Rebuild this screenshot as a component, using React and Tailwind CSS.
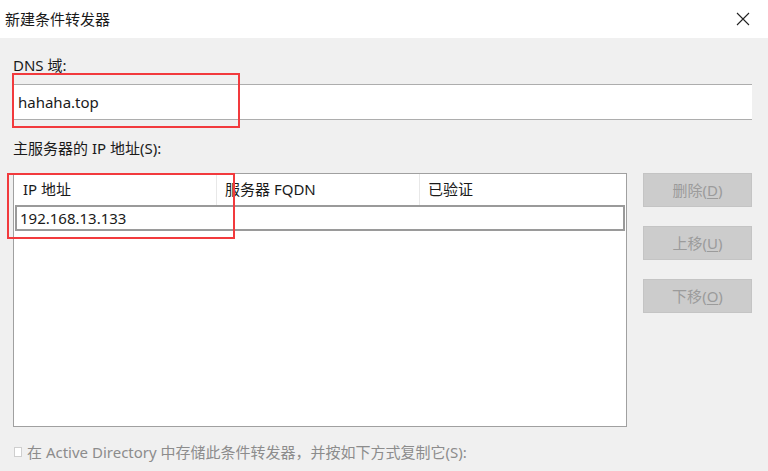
import React from 'react';

const FONT = { fontFamily: '"Noto Sans", "Noto Sans CJK SC", sans-serif' };

const SideButton = ({ label, hotkey }) => (
  <div className="h-[34px] w-[109px] bg-[#cccccc] border border-[#c4c4c4] flex items-center justify-center text-[15px] text-[#9b9b9b]">
    {label}(<span className="underline underline-offset-2">{hotkey}</span>)
  </div>
);

export default function App() {
  return (
    <div className="w-[768px] h-[471px] bg-[#f0f0f0] flex flex-col overflow-hidden relative text-[#1a1a1a]" style={FONT}>
      {/* 标题栏 */}
      <div className="h-[38px] bg-white flex items-center justify-between pl-[5px] pr-[18px] shrink-0">
        <span className="text-[15px] leading-5">新建条件转发器</span>
        <svg width="14" height="14" viewBox="0 0 14 14" className="text-[#222]">
          <path d="M1 1 L13 13 M13 1 L1 13" stroke="currentColor" strokeWidth="1.1" fill="none" />
        </svg>
      </div>

      <div className="flex flex-col px-[13px]">
        <div className="mt-[17px] h-5 leading-5 text-[15px]">DNS 域:</div>
        <div className="mt-[9px] h-[36px] w-[739px] bg-white border-y border-[#adadad] border-x-[#dcdcdc] flex items-center px-[5px] text-[15px]">
          hahaha.top
        </div>

        <div className="mt-[18px] h-5 leading-5 text-[15px]">主服务器的 IP 地址(S):</div>

        <div className="mt-[15px] flex gap-[16px]">
          {/* 地址列表 */}
          <div className="w-[614px] h-[254px] bg-white border border-[#a0a0a0] flex flex-col">
            <div className="h-[31px] flex text-[15px] shrink-0">
              <div className="w-[203px] border-r border-[#e8e8e8] flex items-center pl-[9px]">IP 地址</div>
              <div className="w-[203px] border-r border-[#e8e8e8] flex items-center pl-[8px]">服务器 FQDN</div>
              <div className="flex-1 flex items-center pl-[8px]">已验证</div>
            </div>
            <div className="mx-px h-[26px] border-2 border-[#9a9a9a] flex items-center pl-[3px] text-[15px]">
              192.168.13.133
            </div>
          </div>

          <div className="flex flex-col gap-[19px]">
            <SideButton label="删除" hotkey="D" />
            <SideButton label="上移" hotkey="U" />
            <SideButton label="下移" hotkey="O" />
          </div>
        </div>

        <div className="mt-[15px] ml-px h-5 flex items-center gap-[5px] text-[15px] text-[#8c8c8c]">
          <span className="w-[8px] h-[10px] bg-white border border-[#cfcfcf]" />
          <span>在 Active Directory 中存储此条件转发器，并按如下方式复制它(S):</span>
        </div>
      </div>

      {/* 红色标注框 */}
      <div className="absolute left-[12px] top-[73px] w-[228px] h-[55px] border-2 border-[#f23a3d]" />
      <div className="absolute left-[7px] top-[173px] w-[228px] h-[66px] border-2 border-[#f23a3d]" />
    </div>
  );
}
